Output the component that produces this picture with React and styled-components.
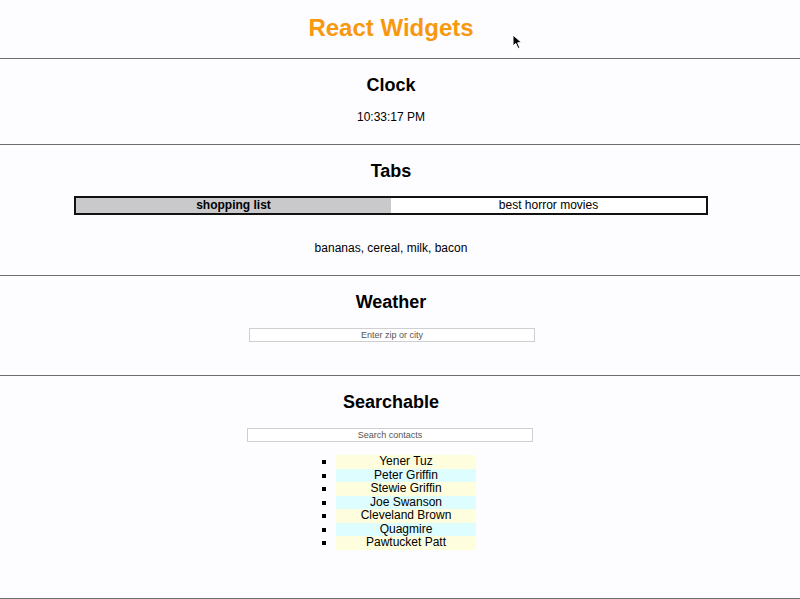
import React from 'react';
import styled, { createGlobalStyle } from 'styled-components';

const GlobalStyle = createGlobalStyle`
  html, body {
    margin: 0;
    padding: 0;
    background: #fdfcff;
  }
  body {
    font-family: "Liberation Sans", Arial, Helvetica, sans-serif;
    color: #000;
  }
`;

const contacts = [
  'Yener Tuz',
  'Peter Griffin',
  'Stewie Griffin',
  'Joe Swanson',
  'Cleveland Brown',
  'Quagmire',
  'Pawtucket Patt',
];

const Page = styled.div`
  position: relative;
  width: 800px;
`;

const Header = styled.h1`
  margin: 0;
  width: 782px;
  padding-top: 14px;
  height: 58px;
  box-sizing: border-box;
  text-align: center;
  font-size: 24px;
  line-height: 28px;
  font-weight: bold;
  color: #f7980f;
`;

const Section = styled.section`
  border-top: 1px solid #6f6f6f;
  width: 800px;
  height: ${props => props.h}px;
  box-sizing: border-box;
  padding-top: 14px;
`;

const Inner = styled.div`
  width: 782px;
  display: flex;
  flex-direction: column;
  align-items: center;
`;

const Title = styled.h2`
  margin: 0;
  font-size: 18px;
  line-height: 24px;
  font-weight: bold;
`;

const Time = styled.div`
  margin-top: 13px;
  font-size: 12px;
  line-height: 15px;
`;

const TabBar = styled.div`
  margin-top: 13px;
  width: 634px;
  height: 19px;
  box-sizing: border-box;
  border: 2px solid #111;
  display: flex;
`;

const Tab = styled.div`
  flex: 1;
  text-align: center;
  font-size: 12px;
  line-height: 15px;
  font-weight: ${props => (props.active ? 'bold' : 'normal')};
  background: ${props => (props.active ? '#c9c8cb' : '#ffffff')};
`;

const TabContent = styled.div`
  margin-top: 26px;
  font-size: 12px;
  line-height: 15px;
`;

const Input = styled.input`
  margin-top: ${props => props.top}px;
  margin-left: ${props => props.shift}px;
  width: 286px;
  height: 14px;
  box-sizing: border-box;
  border: 1px solid #cfcfd2;
  background: #fff;
  padding: 0;
  text-align: center;
  font-family: "Liberation Sans", Arial, sans-serif;
  font-size: 9px;
  outline: none;
  &::placeholder {
    color: #555;
  }
`;

const List = styled.ul`
  margin: 13px 0 0 30px;
  padding: 0;
  list-style: square;
  font-size: 12px;
  line-height: 13.5px;
`;

const Item = styled.li`
  width: 140px;
  height: 13.5px;
  text-align: center;
  font-size: 12px;
  line-height: 13.5px;
  background: ${props => (props.odd ? '#ddfdfe' : '#fefede')};
`;

const Cursor = styled.svg`
  position: absolute;
  left: 512px;
  top: 34px;
`;

export default function App() {
  return (
    <Page>
      <GlobalStyle />
      <Header>React Widgets</Header>
      <Section h={86}>
        <Inner>
          <Title>Clock</Title>
          <Time>10:33:17 PM</Time>
        </Inner>
      </Section>
      <Section h={131}>
        <Inner>
          <Title>Tabs</Title>
          <TabBar>
            <Tab active>shopping list</Tab>
            <Tab>best horror movies</Tab>
          </TabBar>
          <TabContent>bananas, cereal, milk, bacon</TabContent>
        </Inner>
      </Section>
      <Section h={100}>
        <Inner>
          <Title>Weather</Title>
          <Input top={14} shift={2} placeholder="Enter zip or city" />
        </Inner>
      </Section>
      <Section h={223}>
        <Inner>
          <Title>Searchable</Title>
          <Input top={14} shift={-2} placeholder="Search contacts" />
          <List>
            {contacts.map((c, i) => (
              <Item key={c} odd={i % 2 === 1}>{c}</Item>
            ))}
          </List>
        </Inner>
      </Section>
      <Section h={1} />
      <Cursor width="11" height="16" viewBox="0 0 11 16">
        <path d="M1 1 L1 12 L3.8 9.4 L6 14.5 L7.8 13.7 L5.7 8.8 L9.5 8.6 Z" fill="#000" stroke="#fff" strokeWidth="1" />
      </Cursor>
    </Page>
  );
}
